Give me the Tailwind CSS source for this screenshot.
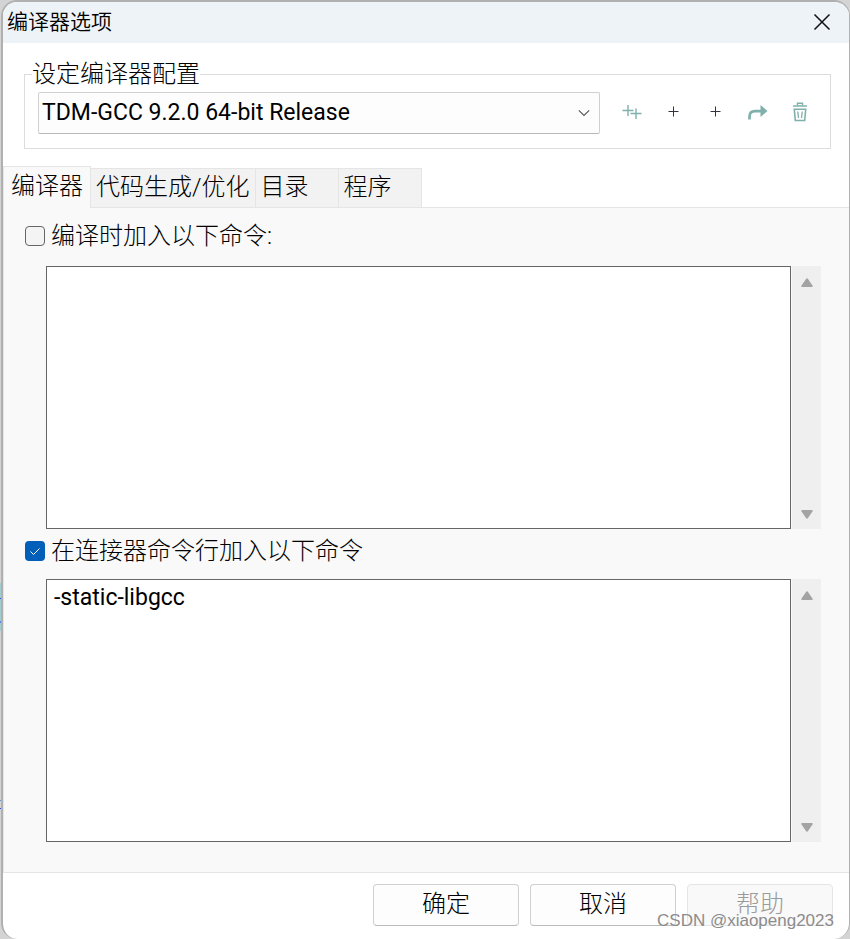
<!DOCTYPE html>
<html lang="zh-CN">
<head>
    <meta charset="UTF-8">
    <meta name="viewport" content="width=device-width, initial-scale=1.0">
    <title>编译器选项</title>
    <script src="https://cdn.jsdelivr.net/npm/@tailwindcss/browser@4"></script>
</head>
<body class="bg-[#d4d4d4] text-black font-['Roboto','Noto_Sans_CJK_SC',sans-serif]">
    <div class="relative min-h-screen pl-px flex overflow-hidden">
        <!-- editor window showing behind the dialog -->
        <div class="absolute left-0 top-[583px] w-1 h-12 bg-[#a4cdd0]">
            <div class="absolute top-[15px] w-px h-px bg-[#2b50d8]"></div>
            <div class="absolute top-[38px] w-px h-0.5 bg-[#5f83e0]"></div>
        </div>
        <div class="absolute left-0 top-[800px] w-px h-[9px] border-t border-t-[#5a9be0] border-b border-b-[#2b50d8]"></div>

        <div class="relative flex-1 flex flex-col bg-white border-2 border-r border-b-0 border-[#b0b0b0] rounded-2xl overflow-hidden">
            <header class="flex items-center justify-between h-[41px] pl-1 pr-[17px] pb-0.5 bg-[#eef3f8]">
                <h1 class="text-[21px] leading-8 font-[350]">编译器选项</h1>
                <button type="button" aria-label="关闭">
                    <svg class="w-5 h-5" viewBox="0 0 20 20" fill="none" stroke="#111" stroke-width="1.5"><path d="M2.5 2.5l15 15M17.5 2.5l-15 15"/></svg>
                </button>
            </header>

            <fieldset class="mt-4 ml-[21px] mr-[18px] pl-[13px] pr-[9px] pt-[3px] pb-3.5 border border-[#dcdcdc]">
                <legend class="-ml-1.5 text-2xl leading-[30px] font-light">设定编译器配置</legend>
                <div class="flex items-start">
                    <div class="relative flex-1">
                        <select aria-label="编译器配置" class="block w-full h-[42px] pl-[3px] pr-8 appearance-none border border-[#d0d0d0] border-b-[#b8b8b8] rounded-xs bg-[#fdfdfd] text-[23px]">
                            <option>TDM-GCC 9.2.0 64-bit Release</option>
                        </select>
                        <svg class="absolute right-2.5 top-4 w-3 h-3 pointer-events-none" viewBox="0 0 12 12" fill="none" stroke="#555" stroke-width="1.1"><path d="M.8 2.300L6 7.500l5.200-5.200"/></svg>
                    </div>
                    <div class="flex ml-[11px]">
                        <button type="button" aria-label="查找编译器" class="w-[42px] h-10 flex items-center justify-center">
                            <svg class="w-5 h-5" viewBox="0 0 20 20" fill="none" stroke="#7fb0ab" stroke-width="1.4"><path d="M.5 8.500h11M6 3v11M8.500 11.500H19.500M14 6.500V17"/></svg>
                        </button>
                        <button type="button" aria-label="添加空白配置" class="w-[42px] h-10 flex items-center justify-center">
                            <svg class="w-5 h-5" viewBox="0 0 20 20" fill="none" stroke="#33333d" stroke-width="1"><path d="M4.500 9.500h10M9.500 4.500v10"/></svg>
                        </button>
                        <button type="button" aria-label="添加配置" class="w-[42px] h-10 flex items-center justify-center">
                            <svg class="w-5 h-5" viewBox="0 0 20 20" fill="none" stroke="#33333d" stroke-width="1"><path d="M4.500 9.500h10M9.500 4.500v10"/></svg>
                        </button>
                        <button type="button" aria-label="重命名" class="w-[42px] h-10 flex items-center justify-center">
                            <svg class="w-5 h-5" viewBox="0 0 20 20" fill="none"><path d="M1.500 17.500v-3Q1.500 9.200 7 9.200h6" stroke="#7fb0ab" stroke-width="2.700"/><path d="M12.500 3l7 6-7 6z" fill="#7fb0ab"/></svg>
                        </button>
                        <button type="button" aria-label="删除" class="w-[42px] h-10 flex items-center justify-center">
                            <svg class="w-5 h-5" viewBox="0 0 20 20" fill="none" stroke="#7fb0ab"><path d="M3 4h14" stroke-width="1.600"/><path d="M7.500 3.500V1.200h5V3.500" stroke-width="1.400"/><path d="M4.300 7.300h11.400l-1 11.200H5.300z" stroke-width="1.600"/><path d="M7.800 9.500l.7 6.500M12.200 9.500l-.7 6.500" stroke-width="1.300"/></svg>
                        </button>
                    </div>
                </div>
            </fieldset>

            <div role="tablist" class="relative z-10 flex items-end h-[42px] mt-[17px] -mb-px text-2xl font-light">
                <button type="button" role="tab" aria-selected="true" class="h-full px-[7px] pb-1 border border-b-0 border-[#e5e5e5] bg-[#f9f9f9] leading-8">编译器</button>
                <button type="button" role="tab" aria-selected="false" class="h-10 px-[5px] pb-0.5 border border-l-0 border-[#e5e5e5] bg-[#f2f2f2] leading-8">代码生成/优化</button>
                <button type="button" role="tab" aria-selected="false" class="h-10 min-w-[83px] px-[5px] pb-0.5 border border-l-0 border-[#e5e5e5] bg-[#f2f2f2] leading-8 text-left">目录</button>
                <button type="button" role="tab" aria-selected="false" class="h-10 min-w-[83px] px-[5px] pb-0.5 border border-l-0 border-[#e5e5e5] bg-[#f2f2f2] leading-8 text-left">程序</button>
            </div>

            <main class="flex-1 flex flex-col pl-[21px] pr-7 pt-3 pb-[30px] bg-[#f9f9f9] border-l border-y border-[#e5e5e5]">
                <label class="flex items-center gap-1.5 h-8 text-2xl font-light">
                    <input type="checkbox" class="w-5 h-5 appearance-none border border-[#666] rounded-sm bg-[#f4f4f4]">
                    编译时加入以下命令:
                </label>
                <div class="flex-1 flex gap-px mt-3.5 ml-[21px]">
                    <textarea aria-label="编译时加入的命令" class="flex-1 px-[7px] py-0.5 border border-[#666] bg-white text-[23px] leading-8 resize-none"></textarea>
                    <div class="w-[29px] pt-3 pb-2.5 flex flex-col items-center justify-between bg-[#efefef]">
                        <svg class="w-3 h-2.5" viewBox="0 0 12 10" fill="#a3a3a3"><path d="M5 1q1-1.300 2 0l4.500 6.500Q12 9 11 9H1Q0 9 .5 7.500z"/></svg>
                        <svg class="w-3 h-2.5" viewBox="0 0 12 10" fill="#a3a3a3"><path d="M5 9q1 1.300 2 0l4.500-6.500Q12 1 11 1H1Q0 1 .5 2.500z"/></svg>
                    </div>
                </div>

                <label class="flex items-center gap-1.5 h-8 mt-1.5 text-2xl font-light">
                    <span class="relative w-5 h-5">
                        <input type="checkbox" checked class="block w-5 h-5 appearance-none rounded-sm bg-[#005fb8]">
                        <svg class="absolute inset-0 w-5 h-5 pointer-events-none" viewBox="0 0 20 20" fill="none" stroke="#fff" stroke-width="1"><path d="M5.500 10.500l3 3 6-6"/></svg>
                    </span>
                    在连接器命令行加入以下命令
                </label>
                <div class="flex-1 flex gap-px mt-3 ml-[21px]">
                    <textarea aria-label="连接器命令行加入的命令" class="flex-1 px-[7px] py-0.5 border border-[#666] bg-white text-[23px] leading-8 resize-none">-static-libgcc</textarea>
                    <div class="w-[29px] pt-3 pb-2.5 flex flex-col items-center justify-between bg-[#efefef]">
                        <svg class="w-3 h-2.5" viewBox="0 0 12 10" fill="#a3a3a3"><path d="M5 1q1-1.300 2 0l4.500 6.500Q12 9 11 9H1Q0 9 .5 7.500z"/></svg>
                        <svg class="w-3 h-2.5" viewBox="0 0 12 10" fill="#a3a3a3"><path d="M5 9q1 1.300 2 0l4.500-6.500Q12 1 11 1H1Q0 1 .5 2.500z"/></svg>
                    </div>
                </div>
            </main>

            <footer class="flex justify-end gap-[11px] pt-[11px] pb-[13px] pr-4 text-2xl font-light">
                <button type="button" class="w-[146px] h-[42px] pb-0.5 border border-[#d0d0d0] border-b-[#bbb] rounded-sm bg-[#fdfdfd]">确定</button>
                <button type="button" class="w-[146px] h-[42px] pb-0.5 border border-[#d0d0d0] border-b-[#bbb] rounded-sm bg-[#fdfdfd]">取消</button>
                <button type="button" disabled class="w-[146px] h-[42px] pb-0.5 border border-[#e5e5e5] rounded-sm bg-[#f9f9f9] text-[#9a9a9a]">帮助</button>
            </footer>
        </div>

        <p class="absolute right-4 bottom-1.5 text-[17px] leading-6 text-[#8c8c8c] font-['Liberation_Sans',sans-serif]">CSDN @xiaopeng2023</p>
    </div>
</body>
</html>
